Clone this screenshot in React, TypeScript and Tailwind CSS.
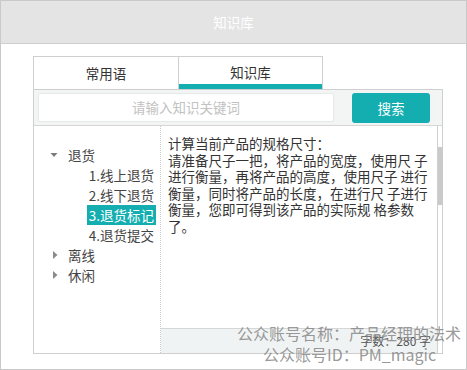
import React from "react"

const FONT = { fontFamily: '"Noto Sans CJK SC", "Noto Sans", sans-serif' }

const lines = [
  "计算当前产品的规格尺寸：",
  "请准备尺子一把，将产品的宽度，使用尺 子",
  "进行衡量，再将产品的高度，使用尺子 进行",
  "衡量，同时将产品的长度，在进行尺 子进行",
  "衡量，您即可得到该产品的实际规 格参数",
  "了。",
]

const children = ["1.线上退货", "2.线下退货", "3.退货标记", "4.退货提交"]

function Caret({ open }: { open: boolean }) {
  return open ? (
    <svg width="8" height="6" viewBox="0 0 8 6" className="shrink-0">
      <path d="M0.5 1 L7.5 1 L4 5 Z" fill="#7a7a7a" />
    </svg>
  ) : (
    <svg width="8" height="10" viewBox="0 0 8 10" className="shrink-0">
      <path d="M2 1 L6.5 5 L2 9 Z" fill="#8a8a8a" />
    </svg>
  )
}

export default function App() {
  return (
    <div
      className="relative w-[467px] h-[370px] border border-[#c9c9c9] bg-white text-[13.5px] text-[#333] overflow-hidden"
      style={FONT}
    >
      {/* 顶部标题栏 */}
      <div className="h-[43px] bg-[#e4e4e4] border-b border-[#cfcfcf] flex items-center justify-center text-white">
        知识库
      </div>

      <div className="pl-[32px] pt-[12px]">
        {/* Tabs */}
        <div className="flex h-[33px]">
          <div className="w-[146px] border border-b-0 border-[#cfcfcf] flex items-center justify-center">
            常用语
          </div>
          <div className="w-[144px] border-t border-r border-[#cfcfcf] flex flex-col">
            <div className="flex-1 flex items-center justify-center pt-[3px]">知识库</div>
            <div className="h-[5px] bg-[#14aeb0]" />
          </div>
        </div>

        {/* 面板 */}
        <div className="w-[410px] h-[265px] border border-[#cfcfcf] flex flex-col">
          <div className="h-[36px] bg-[#f3f5f5] border-b border-[#d6d6d6] flex items-start justify-between pl-[4px] pr-[12px] pt-[3px]">
            <div className="w-[296px] h-[29px] bg-white border border-[#e6e9e9] rounded-[2px] flex items-center justify-center text-[#c2c2c2]">
              请输入知识关键词
            </div>
            <button className="w-[78px] h-[30px] rounded-[3px] bg-[#14aeb0] text-white">搜索</button>
          </div>

          <div className="flex-1 flex min-h-0">
            {/* 左侧分类树 */}
            <div className="w-[127px] border-r border-dotted border-[#c8c8c8] pt-[19px] text-[#444]">
              <div className="flex items-center h-[20px] pl-[16px] gap-[10px]">
                <Caret open />
                <span>退货</span>
              </div>
              <div className="flex flex-col items-end pr-[4px]">
                {children.map(c => (
                  <div
                    key={c}
                    className={`h-[20px] leading-[20px] px-[2px] ${c.startsWith("3") ? "bg-[#14aeb0] text-white" : ""}`}
                  >
                    {c}
                  </div>
                ))}
              </div>
              {["离线", "休闲"].map(t => (
                <div key={t} className="flex items-center h-[20px] pl-[17px] gap-[9px]">
                  <Caret open={false} />
                  <span>{t}</span>
                </div>
              ))}
            </div>

            {/* 右侧内容 */}
            <div className="w-[277px] border-r border-[#cfcfcf] flex flex-col">
              <div className="flex-1 pl-[7px] pt-[9px] leading-[16.5px] whitespace-pre">
                {lines.map(l => (
                  <div key={l}>{l}</div>
                ))}
              </div>
              <div className="h-[25px] bg-[#f0f3f3] border-t border-[#d6d6d6] flex items-center justify-end pr-[6px] text-[12px] text-[#555]">
                字数：280 字
              </div>
            </div>

            {/* 滚动条 */}
            <div className="w-[4px] pt-[21px]">
              <div className="h-[58px] w-[5px] bg-[#cacaca]" />
            </div>
          </div>
        </div>
      </div>

      {/* 水印 */}
      <div className="absolute left-[236px] top-[321px] text-[16px] leading-[22px] text-[#8c8c8c]/90 whitespace-nowrap">
        公众账号名称：产品经理的法术
      </div>
      <div className="absolute left-[262px] top-[342px] text-[16px] leading-[22px] text-[#8c8c8c]/90 whitespace-nowrap">
        公众账号ID：PM_magic
      </div>
    </div>
  )
}
